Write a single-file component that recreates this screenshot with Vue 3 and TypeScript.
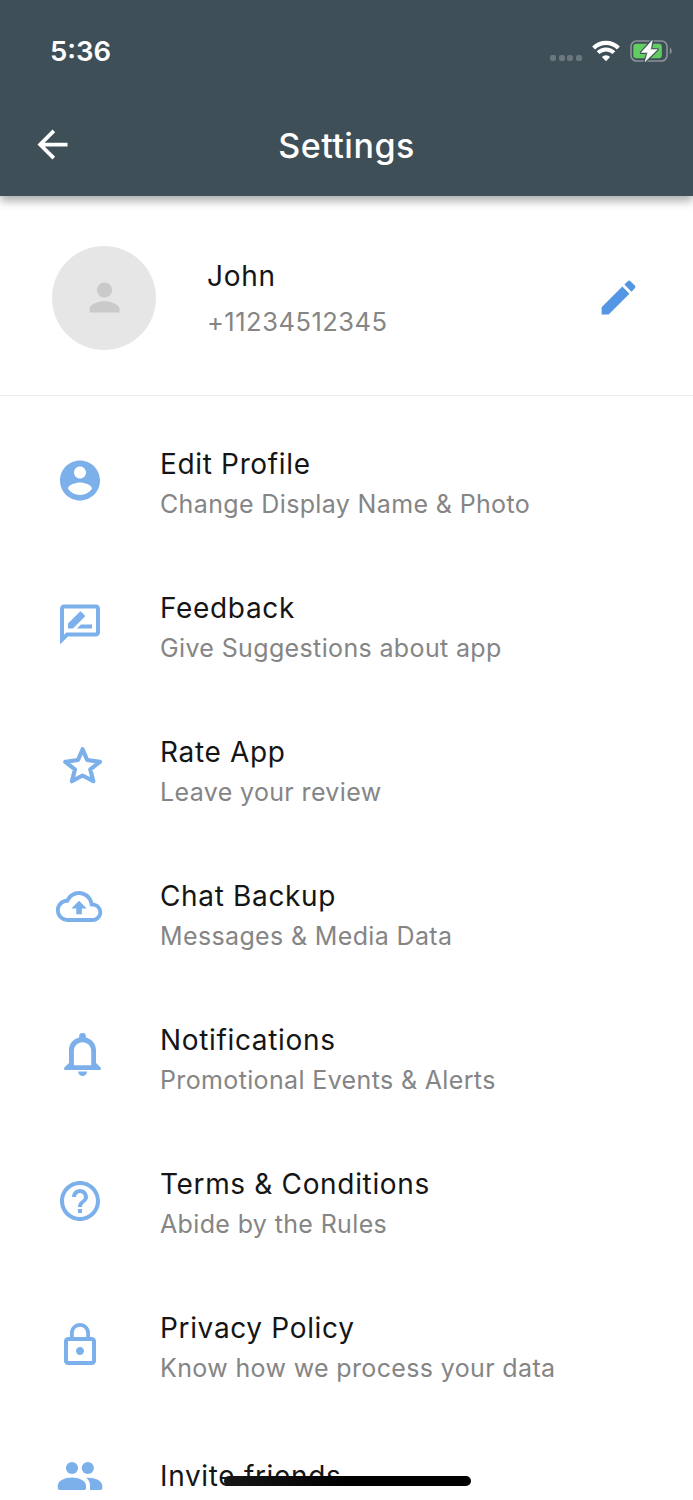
<script setup lang="ts">
interface SettingItem {
  id: string
  title: string
  subtitle?: string
}

const items: SettingItem[] = [
  { id: 'profile', title: 'Edit Profile', subtitle: 'Change Display Name & Photo' },
  { id: 'feedback', title: 'Feedback', subtitle: 'Give Suggestions about app' },
  { id: 'rate', title: 'Rate App', subtitle: 'Leave your review' },
  { id: 'backup', title: 'Chat Backup', subtitle: 'Messages & Media Data' },
  { id: 'notifications', title: 'Notifications', subtitle: 'Promotional Events & Alerts' },
  { id: 'terms', title: 'Terms & Conditions', subtitle: 'Abide by the Rules' },
  { id: 'privacy', title: 'Privacy Policy', subtitle: 'Know how we process your data' },
  { id: 'invite', title: 'Invite friends' },
]
</script>

<template>
  <div class="screen">
    <header class="header">
      <div class="status">
        <span class="time">5:36</span>
        <div class="indicators">
          <span class="dots"><i v-for="n in 4" :key="n" /></span>
          <svg class="wifi" width="28" height="22" viewBox="0 0 28 22" fill="none" stroke="#fff">
            <path d="M1.6 7.9a17.6 17.6 0 0 1 24.8 0" stroke-width="4.2" />
            <path d="M6.1 12.7a11.2 11.2 0 0 1 15.8 0" stroke-width="4" />
            <path d="M14 21.2l-4.1-4.3a5.8 5.8 0 0 1 8.2 0z" fill="#fff" stroke="none" />
          </svg>
          <svg class="battery" width="43" height="24" viewBox="0 0 43 24">
            <rect x="1" y="2" width="36" height="20" rx="5.5" fill="none" stroke="#8a9499" stroke-width="1.6" />
            <path d="M39.800 8.400c2.500 1.300 2.500 5.600 0 6.900z" fill="#8a9499" />
            <rect x="3.300" y="4.800" width="28.500" height="14.400" rx="3" fill="#62ce62" />
            <path d="M22.300 1.300 11.200 13.600h6.400L15 22.800 27.400 10.600h-6.700z" fill="#3f4f57" stroke="#3f4f57" stroke-width="2.800" stroke-linejoin="round" />
            <path d="M22.300 1.300 11.200 13.600h6.400L15 22.800 27.400 10.600h-6.700z" fill="#fff" stroke="#fff" stroke-width=".5" stroke-linejoin="round" />
          </svg>
        </div>
      </div>
      <div class="bar">
        <svg class="back" width="45" height="45" viewBox="0 0 24 24" fill="#fff">
          <path d="M20 11H7.83l5.59-5.59L12 4l-8 8 8 8 1.41-1.41L7.83 13H20v-2z" />
        </svg>
        <h1>Settings</h1>
      </div>
    </header>

    <section class="account">
      <div class="avatar">
        <svg width="45" height="45" viewBox="0 0 24 24" fill="#cacaca">
          <path d="M12 12c2.21 0 4-1.79 4-4s-1.79-4-4-4-4 1.79-4 4 1.79 4 4 4zm0 2c-2.67 0-8 1.34-8 4v2h16v-2c0-2.66-5.33-4-8-4z" />
        </svg>
      </div>
      <div class="identity">
        <div class="name">John</div>
        <div class="phone">+11234512345</div>
      </div>
      <svg class="pencil" width="45" height="45" viewBox="0 0 24 24" fill="#5396e4">
        <path d="M3 17.25V21h3.75L17.81 9.94l-3.75-3.75L3 17.25zM20.71 7.04c.39-.39.39-1.02 0-1.41l-2.34-2.34c-.39-.39-1.02-.39-1.41 0l-1.83 1.83 3.75 3.75 1.83-1.83z" />
      </svg>
    </section>

    <main class="list">
      <div v-for="item in items" :key="item.id" class="row" :class="{ single: !item.subtitle }">
        <svg class="icon" width="64" height="64" viewBox="0 0 64 64" fill="#7cb0eb">
          <g v-if="item.id === 'profile'" transform="translate(8 4.600) scale(2)">
            <path d="M12 2C6.48 2 2 6.48 2 12s4.48 10 10 10 10-4.48 10-10S17.52 2 12 2zm0 3c1.66 0 3 1.34 3 3s-1.34 3-3 3-3-1.34-3-3 1.34-3 3-3zm0 14.2c-2.5 0-4.71-1.28-6-3.22.03-1.99 4-3.08 6-3.08 1.99 0 5.97 1.09 6 3.08-1.29 1.94-3.5 3.22-6 3.22z" />
          </g>
          <g v-else-if="item.id === 'feedback'" transform="translate(8 4.5) scale(2)">
            <path d="M20 2H4c-1.1 0-1.99.9-1.99 2L2 22l4-4h14c1.1 0 2-.9 2-2V4c0-1.1-.9-2-2-2zm0 14H5.17L4 17.17V4h16v12zM10.5 14H18v-2h-5.5zM14.36 8.13c.2-.2.2-.51 0-.71l-1.77-1.77c-.2-.2-.51-.2-.71 0L6 11.53V14h2.47l5.89-5.87z" />
          </g>
          <path v-else-if="item.id === 'rate'" d="M34.6 9.3 39.2 20 51.900 21.9 42.3 29.4 45.3 41.2 34.6 35.5 23.9 41.2 26.9 29.4 17.300 21.9 30 20z" fill="none" stroke="#7cb0eb" stroke-width="4.2" stroke-linejoin="round" />
          <g v-else-if="item.id === 'backup'" transform="translate(7.9 -.7) scale(1.93)">
            <path d="M19.35 10.04C18.67 6.59 15.64 4 12 4 9.11 4 6.6 5.64 5.35 8.04 2.34 8.36 0 10.91 0 14c0 3.31 2.69 6 6 6h13c2.76 0 5-2.24 5-5 0-2.64-2.05-4.78-4.65-4.96zM19 18H6c-2.21 0-4-1.79-4-4 0-2.05 1.53-3.76 3.56-3.97l1.07-.11.5-.95C8.08 7.14 9.94 6 12 6c2.62 0 4.88 1.86 5.39 4.43l.3 1.5 1.53.11c1.56.1 2.78 1.41 2.78 2.96 0 1.65-1.35 3-3 3zM8 13h2.55v3h2.9v-3H16l-4-4z" />
          </g>
          <g v-else-if="item.id === 'notifications'">
            <path fill-rule="evenodd" d="M34.5 5a3.4 3.4 0 0 1 3.4 3.4v1.2C43.8 11 48 16 48 22.5V35l4.7 4.6V42H16.3v-2.4L21 35V22.5C21 16 25.2 11 31.1 9.6V8.4A3.4 3.4 0 0 1 34.5 5zM25.9 37.3h17.3V23c0-5-3.8-8.8-8.65-8.8S25.9 18 25.9 23z" />
            <path d="M30.2 43.6h8.8a4.4 4.4 0 0 1-8.8 0z" />
          </g>
          <g v-else-if="item.id === 'terms'" transform="translate(8 5) scale(2)">
            <path d="M11 18h2v-2h-2v2zm1-16C6.48 2 2 6.48 2 12s4.48 10 10 10 10-4.48 10-10S17.52 2 12 2zm0 18c-4.41 0-8-3.59-8-8s3.59-8 8-8 8 3.59 8 8-3.59 8-8 8zm0-14c-2.21 0-4 1.79-4 4h2c0-1.1.9-2 2-2s2 .9 2 2c0 2-3 1.75-3 5h2c0-2.25 3-2.5 3-5 0-2.21-1.79-4-4-4z" />
          </g>
          <g v-else-if="item.id === 'privacy'" transform="translate(8 5) scale(2)">
            <path d="M12 17c1.1 0 2-.9 2-2s-.9-2-2-2-2 .9-2 2 .9 2 2 2zm6-9h-1V6c0-2.76-2.24-5-5-5S7 3.24 7 6v2H6c-1.1 0-2 .9-2 2v10c0 1.1.9 2 2 2h12c1.1 0 2-.9 2-2V10c0-1.1-.9-2-2-2zM8.9 6c0-1.71 1.39-3.1 3.1-3.1s3.1 1.39 3.1 3.1v2H8.9V6zM18 20H6V10h12v10z" />
          </g>
          <g v-else>
            <circle cx="24" cy="8" r="6.1" />
            <circle cx="39.8" cy="8" r="6.1" />
            <path d="M9.8 28.2v-2.4c0-5.2 7.2-8.2 14.1-8.2S38 20.6 38 25.8v2.4a1.8 1.8 0 0 1-1.8 1.8H11.6a1.8 1.8 0 0 1-1.8-1.8z" />
            <path d="M38.2 17.7c8-.5 16.1 2.4 16.1 8.1v2.4a1.8 1.8 0 0 1-1.8 1.8H42v-4.4c0-3.600-1.500-6-3.800-7.900z" />
          </g>
        </svg>
        <div class="text">
          <div class="title">{{ item.title }}</div>
          <div v-if="item.subtitle" class="subtitle">{{ item.subtitle }}</div>
        </div>
      </div>
    </main>

    <div class="home-bar" />
  </div>
</template>

<style>
body {
  margin: 0;
}
</style>

<style scoped>
.screen {
  position: relative;
  width: 693px;
  height: 1500px;
  overflow: hidden;
  background: #fff;
  color: #151515;
  font-family: Inter, "Liberation Sans", sans-serif;
  white-space: nowrap;
}
.header {
  position: relative;
  height: 196px;
  background: #3f4f57;
  color: #fff;
  box-shadow: 0 5px 9px rgba(0, 0, 0, 0.33);
}
.status {
  display: flex;
  justify-content: space-between;
  height: 102px;
  align-items: center;
  padding: 0 21px 0 50px;
  box-sizing: border-box;
}
.time {
  font-size: 27.500px;
  font-weight: 600;
  line-height: 32px;
}
.indicators {
  display: flex;
  align-items: center;
}
.dots {
  display: flex;
  gap: 2.700px;
  margin: 14px 10px 0 0;
}
.dots i {
  width: 6px;
  height: 6px;
  border-radius: 2px;
  background: #6b777e;
}
.wifi {
  margin-right: 10px;
}
.battery {
  margin-right: -1px;
}
.bar {
  display: grid;
  grid-template-columns: 75px 1fr 75px;
  align-items: center;
  height: 85px;
}
.back {
  margin-left: 30px;
}
h1 {
  margin: 2px 0 0;
  text-align: center;
  font-size: 34px;
  font-weight: 500;
  letter-spacing: 0.500px;
  line-height: 40px;
}
.account {
  display: flex;
  align-items: center;
  height: 200px;
  box-sizing: border-box;
  padding: 4px 52px 0 52px;
  border-bottom: 1px solid #ededed;
}
.avatar {
  display: grid;
  place-items: center;
  width: 104px;
  height: 104px;
  border-radius: 50%;
  background: #e6e6e6;
}
.identity {
  flex: 1;
  margin-left: 51px;
  padding-top: 3px;
}
.name {
  font-size: 28px;
  line-height: 46px;
  letter-spacing: 0.700px;
}
.phone {
  font-size: 25.500px;
  line-height: 46px;
  letter-spacing: 0.500px;
  color: #858585;
}
.list {
  padding-top: 16px;
}
.row {
  display: flex;
  height: 144px;
  box-sizing: border-box;
  padding: 32px 0 0 48px;
}
.icon {
  flex: none;
  margin: 8px 48px 0 0;
}
.title {
  font-size: 28px;
  line-height: 40px;
  letter-spacing: 0.660px;
}
.single .title {
  padding-top: 4px;
}
.subtitle {
  font-size: 25px;
  line-height: 40px;
  letter-spacing: 0.360px;
  color: #858585;
}
.home-bar {
  position: absolute;
  left: 224px;
  bottom: 14px;
  width: 247px;
  height: 10px;
  border-radius: 5px;
  background: linear-gradient(90deg, #171717, #000 50%);
}
</style>
